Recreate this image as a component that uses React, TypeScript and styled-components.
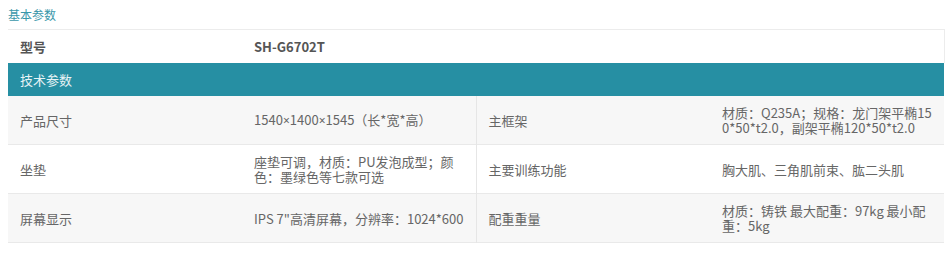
import styled, { createGlobalStyle } from "styled-components"

const Global = createGlobalStyle`
    body {
        margin: 0;
        background: #fff;
        font-family: "Noto Sans CJK SC", sans-serif;
    }
`

const Wrap = styled.div`
    padding: 6px 6px 0 8px;
`

const Title = styled.h3`
    margin: 0;
    height: 23px;
    font-size: 12px;
    font-weight: normal;
    line-height: 18px;
    color: #3a97aa;
`

const Table = styled.table`
    width: 936px;
    border-collapse: collapse;
    table-layout: fixed;
    font-size: 13px;
    color: #666;
`

const Row = styled.tr<{ $stripe?: boolean }>`
    background: ${({ $stripe }) => ($stripe ? "#f7f7f7" : "#fff")};
    border-bottom: 1px solid #e9e9e9;
`

const Cell = styled.td<{ $bold?: boolean; $split?: boolean; $tall?: boolean }>`
    height: ${({ $tall }) => ($tall ? "48px" : "33px")};
    padding: 0 12px;
    line-height: 15px;
    word-break: break-all;
    vertical-align: middle;
    font-weight: ${({ $bold }) => ($bold ? 700 : "normal")};
    color: ${({ $bold }) => ($bold ? "#555" : "#666")};
    border-right: ${({ $split }) => ($split ? "1px solid #e6e6e6" : "none")};
`

const Times = styled.span`
    font-family: "Noto Sans", sans-serif;
    font-size: 12px;
`

const Head = styled.td`
    height: 33px;
    padding: 0 12px;
    background: #268fa3;
    color: #e6f3f5;
    font-size: 13px;
`

const TopRow = styled.tr`
    border-top: 1px solid #ececec;
    border-right: 1px solid #ececec;
`

const specs = [
    ["产品尺寸", "1540×1400×1545（长*宽*高）", "主框架", "材质：Q235A；规格：龙门架平椭150*50*t2.0，副架平椭120*50*t2.0"],
    ["坐垫", "座垫可调，材质：PU发泡成型；颜色：墨绿色等七款可选", "主要训练功能", "胸大肌、三角肌前束、肱二头肌"],
    ["屏幕显示", "IPS 7\"高清屏幕，分辨率：1024*600", "配重重量", "材质：铸铁 最大配重：97kg 最小配重：5kg"],
]

const withTimes = (text: string) =>
    text.split("×").map((part, i) => (
        <span key={i}>
            {i > 0 && <Times>×</Times>}
            {part}
        </span>
    ))

const App = () => {
    return (
        <Wrap>
            <Global />
            <Title>基本参数</Title>
            <Table>
                <colgroup>
                    <col width="234" />
                    <col width="234" />
                    <col width="234" />
                    <col width="234" />
                </colgroup>
                <tbody>
                    <TopRow>
                        <Cell $bold>型号</Cell>
                        <Cell $bold colSpan={3}>SH-G6702T</Cell>
                    </TopRow>
                    <tr>
                        <Head colSpan={4}>技术参数</Head>
                    </tr>
                    {specs.map((s, i) => (
                        <Row key={s[0]} $stripe={i % 2 === 0}>
                            <Cell $tall>{s[0]}</Cell>
                            <Cell $tall $split>{withTimes(s[1])}</Cell>
                            <Cell $tall>{s[2]}</Cell>
                            <Cell $tall>{s[3]}</Cell>
                        </Row>
                    ))}
                </tbody>
            </Table>
        </Wrap>
    )
}

export default App
